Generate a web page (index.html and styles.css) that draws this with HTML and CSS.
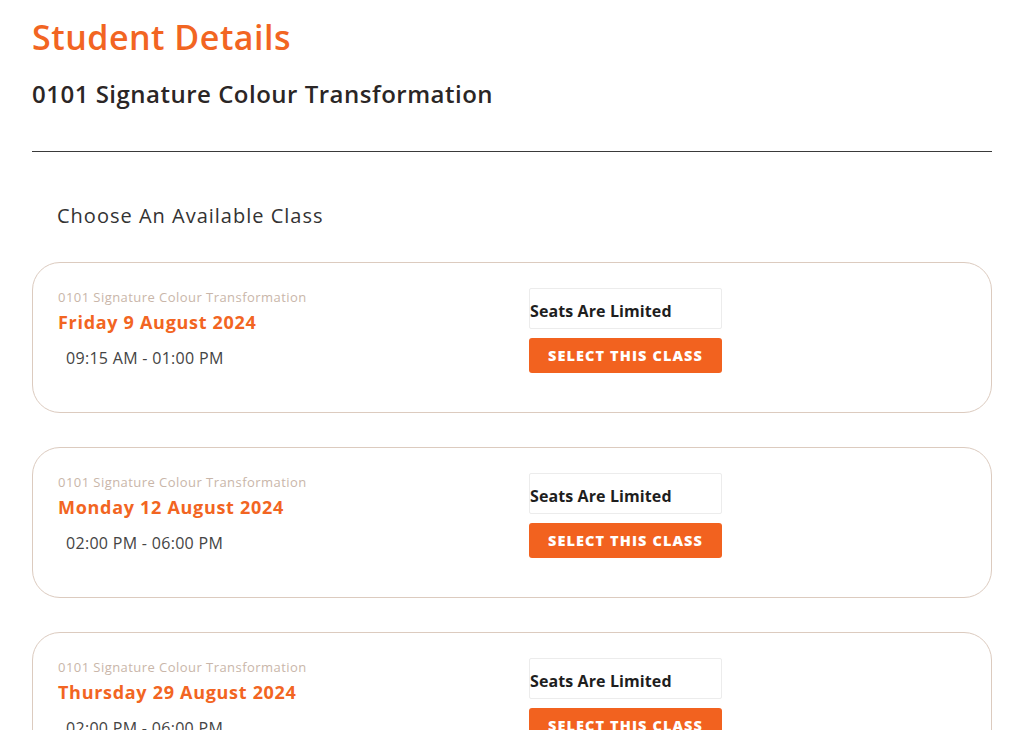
FILE: index.html
```html
<!DOCTYPE html>
<html lang="en">
<head>
  <meta charset="UTF-8">
  <title>Student Details</title>
  <link rel="stylesheet" href="styles.css">
</head>
<body>
  <div class="page">
    <h1 class="page-title">Student Details</h1>
    <h2 class="course-title">0101 Signature Colour Transformation</h2>
    <hr class="divider">

    <h3 class="choose-title">Choose An Available Class</h3>

    <!-- class list -->
    <div class="class-list">
      <div class="class-card">
        <div class="class-info">
          <p class="class-course">0101 Signature Colour Transformation</p>
          <p class="class-date">Friday 9 August 2024</p>
          <p class="class-time">09:15 AM - 01:00 PM</p>
        </div>
        <div class="class-action">
          <div class="seats">Seats Are Limited</div>
          <button class="select-btn">Select This Class</button>
        </div>
      </div>

      <div class="class-card">
        <div class="class-info">
          <p class="class-course">0101 Signature Colour Transformation</p>
          <p class="class-date">Monday 12 August 2024</p>
          <p class="class-time">02:00 PM - 06:00 PM</p>
        </div>
        <div class="class-action">
          <div class="seats">Seats Are Limited</div>
          <button class="select-btn">Select This Class</button>
        </div>
      </div>

      <div class="class-card">
        <div class="class-info">
          <p class="class-course">0101 Signature Colour Transformation</p>
          <p class="class-date">Thursday 29 August 2024</p>
          <p class="class-time">02:00 PM - 06:00 PM</p>
        </div>
        <div class="class-action">
          <div class="seats">Seats Are Limited</div>
          <button class="select-btn">Select This Class</button>
        </div>
      </div>
    </div>
  </div>
</body>
</html>
```

FILE: styles.css
```css
body {
  font-family: "Open Sans", "Noto Sans", sans-serif;
  margin: 0;
  padding: 0;
  background-color: #fff;
  color: #333;
}
.page {
  padding: 13px 32px 0 32px;
}
.page-title {
  margin: 0;
  font-size: 34px;
  font-weight: 600;
  line-height: 48px;
  letter-spacing: 0.5px;
  color: #f26522;
}
.course-title {
  margin: 17px 0 0 0;
  font-size: 24px;
  font-weight: 600;
  line-height: 32px;
  letter-spacing: 0.5px;
  color: #2b2626;
}
.divider {
  margin: 41px 0 0 0;
  border: none;
  border-top: 1px solid #3a3a3a;
}
.choose-title {
  margin: 50px 0 0 25px;
  font-size: 20px;
  font-weight: 400;
  line-height: 28px;
  letter-spacing: 1px;
  color: #333;
}
.class-list {
  margin-top: 32px;
  display: flex;
  flex-direction: column;
  gap: 34px;
}
.class-card {
  display: grid;
  grid-template-columns: 471px 193px;
  height: 151px;
  box-sizing: border-box;
  border: 1px solid #dccbbf;
  border-radius: 28px;
  padding: 25px 0 0 25px;
}
.class-info p {
  margin: 0;
}
.class-course {
  font-size: 13px;
  line-height: 18px;
  letter-spacing: 0.45px;
  color: #c9b6a9;
}
.class-date {
  margin-top: 3px !important;
  font-size: 18px;
  font-weight: 700;
  line-height: 26px;
  letter-spacing: 0.7px;
  color: #f26522;
}
.class-time {
  margin: 11px 0 0 8px !important;
  font-size: 16px;
  line-height: 24px;
  letter-spacing: 0.3px;
  color: #444;
}
.class-action {
  display: flex;
  flex-direction: column;
  gap: 9px;
}
.seats {
  height: 41px;
  box-sizing: border-box;
  border: 1px solid #ececec;
  border-radius: 2px;
  font-size: 16px;
  font-weight: 700;
  line-height: 45px;
  letter-spacing: 0.1px;
  color: #1e1e1e;
}
.select-btn {
  height: 35px;
  border: none;
  border-radius: 3px;
  background-color: #f2621f;
  color: #fff;
  font-family: "Open Sans", sans-serif;
  font-size: 14.5px;
  font-weight: 800;
  text-transform: uppercase;
  letter-spacing: 1.1px;
  cursor: pointer;
}
```
